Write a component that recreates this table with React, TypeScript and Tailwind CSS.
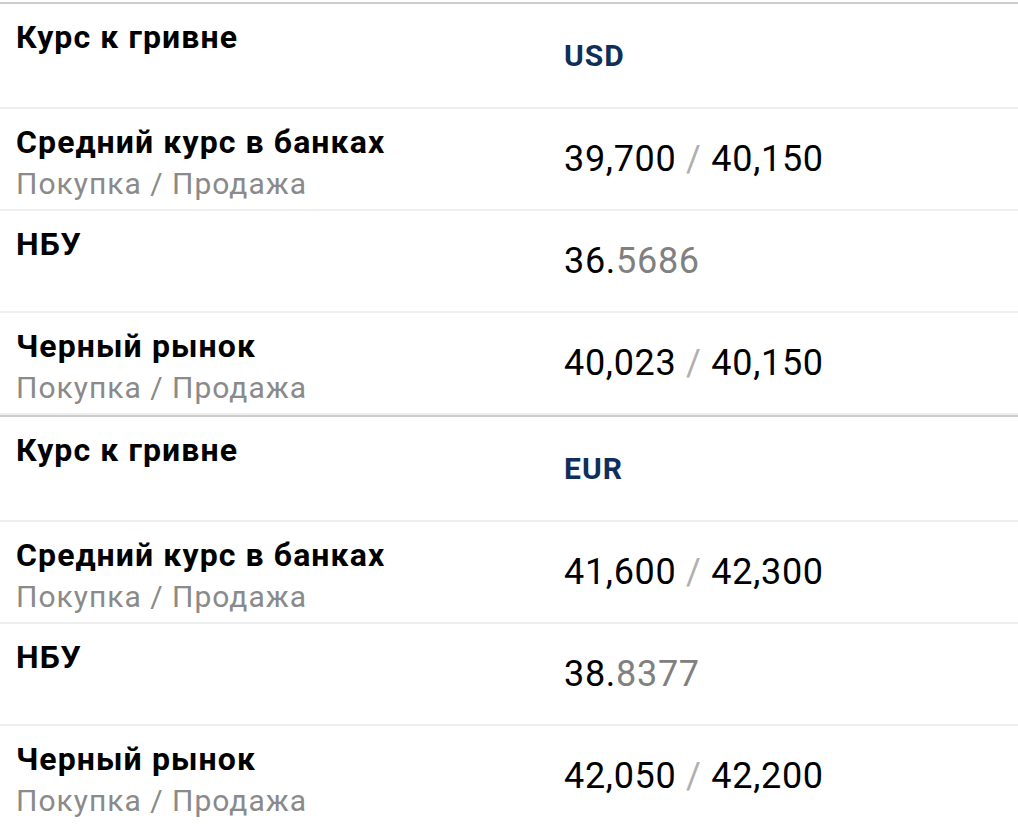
import React from 'react';

interface RateRow {
  label: string;
  sub?: string;
  buy?: string;
  sell?: string;
  whole?: string;
  frac?: string;
}

interface RateTable {
  currency: string;
  rows: RateRow[];
}

const tables: RateTable[] = [
  {
    currency: 'USD',
    rows: [
      { label: 'Средний курс в банках', sub: 'Покупка / Продажа', buy: '39,700', sell: '40,150' },
      { label: 'НБУ', whole: '36.', frac: '5686' },
      { label: 'Черный рынок', sub: 'Покупка / Продажа', buy: '40,023', sell: '40,150' },
    ],
  },
  {
    currency: 'EUR',
    rows: [
      { label: 'Средний курс в банках', sub: 'Покупка / Продажа', buy: '41,600', sell: '42,300' },
      { label: 'НБУ', whole: '38.', frac: '8377' },
      { label: 'Черный рынок', sub: 'Покупка / Продажа', buy: '42,050', sell: '42,200' },
    ],
  },
];

const Value: React.FC<{ row: RateRow }> = ({ row }) => {
  if (row.whole) {
    return (
      <span className="text-[36px] tracking-[0.7px] text-black">
        {row.whole}
        <span className="text-[#808080]">{row.frac}</span>
      </span>
    );
  }
  return (
    <span className="text-[36px] tracking-[0.7px] text-black">
      {row.buy} <span className="text-[#b0b0b0]">/</span> {row.sell}
    </span>
  );
};

const Table: React.FC<{ table: RateTable }> = ({ table }) => {
  return (
    <div className="border-t-2 border-[#cccccc]">
      <div className="grid grid-cols-[547px_1fr] h-[105px] border-b-2 border-[#eeeeee]">
        <div className="pl-[16px] pt-[13px] text-[32px] leading-[40px] tracking-[1.1px] font-bold text-black">
          Курс к гривне
        </div>
        <div className="pl-[17px] flex items-center text-[30px] tracking-[1px] font-bold text-[#0f2f5a]">
          {table.currency}
        </div>
      </div>
      {table.rows.map((row, i) => (
        <div key={i} className="grid grid-cols-[547px_1fr] h-[102px] border-b-2 border-[#eeeeee]">
          <div className="pl-[16px] pt-[13px]">
            <div className="text-[32px] leading-[40px] tracking-[1.1px] font-bold text-black">{row.label}</div>
            {row.sub && (
              <div className="text-[30px] leading-[44px] tracking-[1px] text-[#8a8a8a]">{row.sub}</div>
            )}
          </div>
          <div className="pl-[17px] flex items-center">
            <Value row={row} />
          </div>
        </div>
      ))}
    </div>
  );
};

export default function App() {
  return (
    <div
      className="w-[1018px] h-[826px] overflow-hidden bg-white pt-[2px]"
      style={{ fontFamily: 'Roboto, "Noto Sans", sans-serif' }}
    >
      {tables.map((t) => (
        <Table key={t.currency} table={t} />
      ))}
    </div>
  );
}
